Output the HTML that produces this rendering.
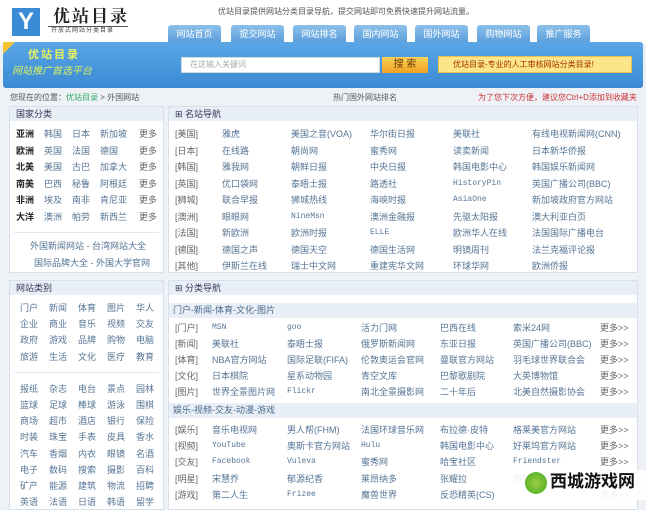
<!DOCTYPE html>
<html><head><meta charset="utf-8"><style>
*{margin:0;padding:0;box-sizing:border-box}
body{width:646px;height:500px;overflow:hidden;background:#eef2f7;font-family:"Liberation Sans","Noto Sans CJK SC",sans-serif;font-size:9px;color:#557595;position:relative}
.a{position:absolute;white-space:nowrap;line-height:12px}
.tab{position:absolute;top:25px;height:18px;width:53px;background:linear-gradient(#8cc0ea,#5a9edb);border-radius:3px 3px 0 0;color:#fff;font-size:9px;text-align:center;line-height:18px}
.panel{position:absolute;background:#fff;border:1px solid #d6e0eb}
.hd{position:absolute;left:0;right:0;top:0;height:14px;background:#e9eff7;color:#335;font-size:9px;line-height:14px;padding-left:6px}
.sub{position:absolute;left:0;right:0;height:15px;background:#e9eff7;color:#4a6a8a;font-size:9px;line-height:15px;padding-left:4px}
.g{color:#666}
.b{color:#222;font-weight:bold}
.m{font-family:"Liberation Mono",monospace;font-size:8px}
</style></head><body>
<div class="a" style="left:0;top:0;width:646px;height:44px;background:#fff"></div>
<div class="a" style="left:12px;top:8px;width:28px;height:28px;background:#3b8ad6;color:#fff;font-size:24px;font-weight:bold;text-align:center;line-height:28px">Y</div>
<div class="a" style="left:53px;top:5px;font-size:17px;line-height:20px;font-weight:bold;color:#222;letter-spacing:2px;font-family:'Noto Serif CJK SC',serif">优站目录</div>
<div class="a" style="left:48px;top:26px;width:80px;height:1px;background:#555"></div>
<div class="a" style="left:51px;top:27px;font-size:6px;line-height:8px;color:#444;letter-spacing:1px">开放式网站分类目录</div>
<div class="a" style="left:218px;top:6px;font-size:8px;color:#555">优站目录提供网站分类目录导航，提交网站即可免费快速提升网站流量。</div>
<div class="tab" style="left:168px">网站首页</div>
<div class="tab" style="left:231px">提交网站</div>
<div class="tab" style="left:293px">网站排名</div>
<div class="tab" style="left:354px">国内网站</div>
<div class="tab" style="left:415px">国外网站</div>
<div class="tab" style="left:477px">购物网站</div>
<div class="tab" style="left:537px">推广服务</div>
<div class="a" style="left:3px;top:42px;width:640px;height:46px;background:linear-gradient(#5aa6e6,#3a8ad4);border-radius:3px"></div>
<div class="a" style="left:3px;top:42px;width:0;height:0;border-top:12px solid #f4c430;border-right:12px solid transparent"></div>
<div class="a" style="left:28px;top:48px;font-size:11px;line-height:14px;font-weight:bold;color:#e8f55a;letter-spacing:2px">优站目录</div>
<div class="a" style="left:12px;top:65px;font-size:10px;line-height:13px;color:#d8f060;font-style:italic">网站推广首选平台</div>
<div class="a" style="left:181px;top:57px;width:199px;height:16px;background:#fff;border:1px solid #cdd;color:#aaa;font-size:8px;line-height:14px;padding-left:8px">在这输入关键词</div>
<div class="a" style="left:382px;top:57px;width:46px;height:16px;background:linear-gradient(#fbd35a,#f0a020);color:#6a3a00;font-size:10px;text-align:center;line-height:16px">搜 索</div>
<div class="a" style="left:438px;top:56px;width:194px;height:17px;background:#fde68a;border:1px solid #e8c050;color:#a03000;font-size:8px;line-height:15px;padding-left:14px">优站目录-专业的人工审核网站分类目录!</div>
<div class="a" style="left:10px;top:92px;font-size:8px;color:#555">您现在的位置：<span style="color:#3a6">优站目录</span> &gt; 外国网站</div>
<div class="a" style="left:333px;top:92px;font-size:8px;color:#555">热门国外网站排名</div>
<div class="a" style="left:478px;top:92px;font-size:8px;color:#c33">为了您下次方便，建议您Ctrl+D添加到收藏夹</div>

<div class="panel" style="left:9px;top:106px;width:155px;height:167px"><div class="hd">国家分类</div></div>
<div class="panel" style="left:168px;top:106px;width:470px;height:167px"><div class="hd">⊞ 名站导航</div></div>
<div class="a" style="left:14px;top:232px;width:145px;height:1px;background:#e3e9f0"></div>
<div class="panel" style="left:9px;top:280px;width:155px;height:230px"><div class="hd">网站类别</div></div>
<div class="a" style="left:14px;top:372px;width:145px;height:1px;background:#e3e9f0"></div>
<div class="panel" style="left:168px;top:280px;width:470px;height:230px"><div class="hd">⊞ 分类导航</div>
<div class="sub" style="top:22px">门户-新闻-体育-文化-图片</div>
<div class="sub" style="top:122px">娱乐-视频-交友-动漫-游戏</div></div>

<div id="c"></div>
<div class="a" style="left:508px;top:470px;width:138px;height:30px;background:rgba(255,255,255,.9)"></div>
<div class="a" style="left:525px;top:472px;width:22px;height:22px;border-radius:50%;background:radial-gradient(#9c4,#4a2)"></div>
<div class="a" style="left:550px;top:471px;font-size:17px;line-height:22px;font-weight:bold;color:#111">西城游戏网</div>
<script>
var c=document.getElementById('c'),h='';
function t(x,y,s,cl){if(/^[A-Za-z0-9 ]+$/.test(s))cl=(cl||'')+' m';h+='<div class="a '+(cl||'')+'" style="left:'+x+'px;top:'+y+'px">'+s+'</div>';}
var L=[['亚洲','韩国','日本','新加坡'],['欧洲','英国','法国','德国'],['北美','美国','古巴','加拿大'],['南美','巴西','秘鲁','阿根廷'],['非洲','埃及','南非','肯尼亚'],['大洋','澳洲','帕劳','新西兰']];
L.forEach(function(r,i){var y=128+i*16.5;t(16,y,r[0],'b');t(44,y,r[1]);t(72,y,r[2]);t(100,y,r[3]);t(139,y,'更多','g');});
t(30,240,'外国新闻网站 - 台湾网站大全');t(34,257,'国际品牌大全 - 外国大学官网');
var M=[['[美国]','雅虎','美国之音(VOA)','华尔街日报','美联社','有线电视新闻网(CNN)'],['[日本]','在线路','朝尚网','蜜秀网','读卖新闻','日本新华侨报'],['[韩国]','雅我网','朝鲜日报','中央日报','韩国电影中心','韩国娱乐新闻网'],['[英国]','优口袋网','泰晤士报','路透社','HistoryPin','英国广播公司(BBC)'],['[狮城]','联合早报','狮城热线','海峡时报','AsiaOne','新加坡政府官方网站'],['[澳洲]','眼眼网','NineMsn','澳洲金融报','先驱太阳报','澳大利亚白页'],['[法国]','新欧洲','欧洲时报','ELLE','欧洲华人在线','法国国际广播电台'],['[德国]','德国之声','德国天空','德国生活网','明镜周刊','法兰克福评论报'],['[其他]','伊斯兰在线','瑞士中文网','重建宪华文网','环球华网','欧洲侨报']];
var mx=[175,222,291,370,453,532];
M.forEach(function(r,i){var y=128+i*16.5;r.forEach(function(s,j){t(mx[j],y,s,j==0?'g':'');});});
var K=[['门户','新闻','体育','图片','华人'],['企业','商业','音乐','视频','交友'],['政府','游戏','品牌','购物','电脑'],['旅游','生活','文化','医疗','教育'],null,['报纸','杂志','电台','景点','园林'],['篮球','足球','棒球','游泳','围棋'],['商场','超市','酒店','银行','保险'],['时装','珠宝','手表','皮具','香水'],['汽车','香烟','内衣','眼镜','名酒'],['电子','数码','搜索','摄影','百科'],['矿产','能源','建筑','物流','招聘'],['英语','法语','日语','韩语','留学']];
var kx=[20,49,78,107,136],ky=302;
K.forEach(function(r,i){if(!r){ky+=16;return;}r.forEach(function(s,j){t(kx[j],ky,s);});ky+=16.2;});
var N=[['[门户]','MSN','goo','活力门网','巴西在线','索米24网'],['[新闻]','美联社','泰晤士报','俄罗斯新闻网','东亚日报','英国广播公司(BBC)'],['[体育]','NBA官方网站','国际足联(FIFA)','伦敦奥运会官网','曼联官方网站','羽毛球世界联合会'],['[文化]','日本棋院','星系动物园','青空文库','巴黎歌剧院','大英博物馆'],['[图片]','世界全景图片网','Flickr','南北全景摄影网','二十年后','北美自然摄影协会']];
var N2=[['[娱乐]','音乐电视网','男人帮(FHM)','法国环球音乐网','布拉德·皮特','格莱美官方网站'],['[视频]','YouTube','奥斯卡官方网站','Hulu','韩国电影中心','好莱坞官方网站'],['[交友]','Facebook','Vuleva','蜜秀网','哈宝社区','Friendster'],['[明星]','宋慧乔','郁源纪香','莱昂纳多','张耀拉','西城游戏网'],['[游戏]','第二人生','Frizee','魔兽世界','反恐精英(CS)','']];
var nx=[175,212,287,361,440,513];
N.forEach(function(r,i){var y=322+i*16;r.forEach(function(s,j){t(nx[j],y,s,j==0?'g':'');});t(600,y,'更多>>','g');});
N2.forEach(function(r,i){var y=424+i*16.2;r.forEach(function(s,j){if(s)t(nx[j],y,s,j==0?'g':'');});t(600,y,'更多>>','g');});
c.innerHTML=h;
</script>
</body></html>
